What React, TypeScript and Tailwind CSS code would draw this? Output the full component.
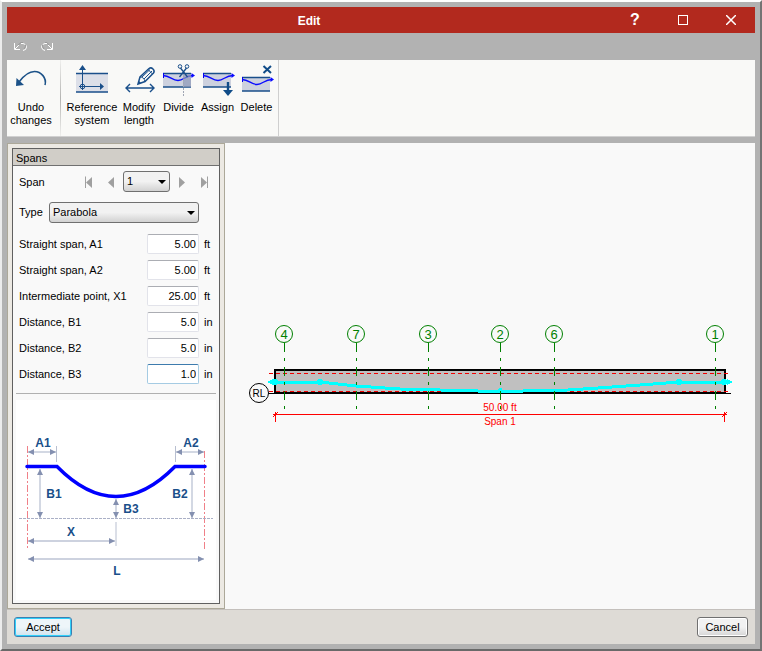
import { useState } from 'react'
import type { ReactNode } from 'react'

const NAVY = '#1a4f8a'

const fields = [
  { id: 'a1', label: 'Straight span, A1', value: '5.00', unit: 'ft' },
  { id: 'a2', label: 'Straight span, A2', value: '5.00', unit: 'ft' },
  { id: 'x1', label: 'Intermediate point, X1', value: '25.00', unit: 'ft' },
  { id: 'b1', label: 'Distance, B1', value: '5.0', unit: 'in' },
  { id: 'b2', label: 'Distance, B2', value: '5.0', unit: 'in' },
  { id: 'b3', label: 'Distance, B3', value: '1.0', unit: 'in', active: true },
]

const gridLines = [
  { name: '4', x: 284 },
  { name: '7', x: 356 },
  { name: '3', x: 428 },
  { name: '2', x: 500 },
  { name: '6', x: 554 },
  { name: '1', x: 715 },
]

function ToolButton({ label, width, viewBox, children }: { label: string; width: string; viewBox: string; children: ReactNode }) {
  return (
    <button type="button" className={`flex flex-col items-center pt-0.5 text-center leading-[13px] ${width}`}>
      <svg viewBox={viewBox} className="mb-[3px] h-9 w-9 shrink-0" fill="none">
        {children}
      </svg>
      {label}
    </button>
  )
}

// Slab with the tendon running through it, shared by three tools
function Tendon({ x, y }: { x: number; y: number }) {
  return (
    <g transform={`translate(${x} ${y})`}>
      <rect x="0" y="0" width="28" height="14" fill="#cdd1de" />
      <path d="M0 0.500H28M0 14H28" stroke={NAVY} strokeWidth="1.4" />
      <path d="M0.500 0V5" stroke="#0000f0" />
      <path d="M0 2.500C7 2.500 9 7.500 15 7.500S22 2.500 30 2.500" stroke="#0a0aff" strokeWidth="1.300" />
      <path d="M28.500 0L32 2.500L28.500 5Z" fill="#0a0aff" />
    </g>
  )
}

function Ribbon() {
  return (
    <div className="flex h-[77px] border-b border-[#d0d0d0] bg-[#f9f9f7]">
      <ToolButton label="Undo changes" width="w-12" viewBox="13 62 36 36">
        <path d="M45 85C47 78 41 71.500 34.500 71.500C28 71.500 23.500 76 19 82" stroke="#1c5288" strokeWidth="1.6" />
        <path d="M16 86L16.500 78L24 85Z" fill="#1c5288" />
      </ToolButton>
      <div className="mr-0.5 ml-[5px] w-px bg-linear-to-b from-[#efefed] via-[#b4b4b2] to-[#efefed]" />
      <ToolButton label="Reference system" width="w-[58px]" viewBox="74 62 36 36">
        <rect x="76" y="73" width="32" height="19" fill="#dcdfe8" />
        <path d="M76 73.500H108M76 92H108" stroke={NAVY} strokeWidth="1.4" />
        <path d="M82.500 69V90M79 86.500H101" stroke={NAVY} strokeWidth="1" />
        <circle cx="82.500" cy="86.500" r="2.300" stroke={NAVY} strokeWidth="1" />
        <path d="M79 70L82.500 65L86 70ZM100 83L104 86.500L100 90Z" fill={NAVY} />
      </ToolButton>
      <ToolButton label="Modify length" width="w-9" viewBox="121 62 36 36">
        <path d="M126 88H154M130 84L126 88L130 92M150 84L154 88L150 92" stroke={NAVY} strokeWidth="1.4" />
        <path d="M138 84L140 77L149 68.500Q151 67 153 69Q155 71 153.500 73L145 81.500Z" stroke={NAVY} strokeWidth="1.5" />
        <path d="M140 77Q144 77 145 81.500M142 77L150 69.500M144 79L152 71M148 69.500L152.500 74" stroke={NAVY} strokeWidth="1" />
        <path d="M138 84L139 81L141 83Z" fill={NAVY} />
      </ToolButton>
      <ToolButton label="Divide" width="ml-0.5 w-[39px]" viewBox="161 62 36 36">
        <Tendon x={163} y={73} />
        <rect x="183" y="74" width="8" height="13" fill="#8d98b8" fillOpacity="0.7" />
        <path d="M183.500 76V97" stroke="#a0a6b4" strokeDasharray="2 1" />
        <path d="M186.500 68L179.500 77M180.500 68L187.500 77" stroke={NAVY} strokeWidth="1.300" />
        <circle cx="180" cy="66.500" r="1.800" stroke={NAVY} />
        <circle cx="187" cy="66.500" r="1.800" stroke={NAVY} />
      </ToolButton>
      <ToolButton label="Assign" width="w-[39px]" viewBox="199 62 36 36">
        <Tendon x={202} y={73} />
        <path d="M227 82V91" stroke="#104c88" strokeWidth="2.4" />
        <path d="M222 90H232L227 96Z" fill="#104c88" />
      </ToolButton>
      <ToolButton label="Delete" width="w-[39px]" viewBox="238 62 36 36">
        <Tendon x={241} y={77} />
        <path d="M262.500 66L270 73M270 66L262.500 73" stroke="#104c88" strokeWidth="2" />
      </ToolButton>
      <div className="ml-0.5 w-px bg-[#cfcfcf]" />
    </div>
  )
}

function NavButton({ label, flip, bar }: { label: string; flip?: boolean; bar?: boolean }) {
  return (
    <button type="button" aria-label={label} className={`w-4 ${flip ? '-scale-x-100' : ''}`}>
      <svg viewBox="0 0 16 16" className="size-4" fill="#a0a0a0">
        <path d="M11 3V14L5 8.500Z" />
        {bar && <path d="M4 2.500H5V14H4Z" />}
      </svg>
    </button>
  )
}

function DropDown({ id, options, width }: { id: string; options: string[]; width: string }) {
  return (
    <div className={`relative ${width}`}>
      <select
        id={id}
        className="block h-[21px] w-full appearance-none rounded-[3px] border border-[#707070] bg-linear-to-b from-[#f2f2f2] from-50% to-[#d2d2d2] pl-[3px] text-black"
      >
        {options.map(o => <option key={o}>{o}</option>)}
      </select>
      <svg viewBox="0 0 8 4" className="pointer-events-none absolute top-[9px] right-1 h-1 w-2">
        <path d="M0 0H8L4 4Z" fill="#000" />
      </svg>
    </div>
  )
}

function Arrow({ x1, y1, x2, y2 }: { x1: number; y1: number; x2: number; y2: number }) {
  const heads = x1 === x2
    ? `M${x1} ${y1}l-3 6h6ZM${x2} ${y2}l-3 -6h6Z`
    : `M${x1} ${y1}l6 -3v6ZM${x2} ${y2}l-6 -3v6Z`
  return (
    <g>
      <path d={`M${x1} ${y1}L${x2} ${y2}`} stroke="#bcc3d4" strokeWidth="1.3" />
      <path d={heads} fill="#8490b0" />
    </g>
  )
}

function ParabolaDiagram() {
  return (
    <svg viewBox="16 400 200 200" className="w-full bg-white" fill="none" role="img" aria-label="Parabola dimensions">
      <path d="M27.500 446V549M204.500 451V549" stroke="#f08088" strokeDasharray="7 2 2 2" />
      <path d="M19 518.500H213" stroke="#aab0c6" strokeDasharray="3 1" />
      <path d="M56.500 446V462M175.500 446V462M116 522V546" stroke="#b8bfd0" />
      <Arrow x1={28} y1={452} x2={56} y2={452} />
      <Arrow x1={176} y1={452} x2={204} y2={452} />
      <Arrow x1={40} y1={469} x2={40} y2={518} />
      <Arrow x1={192} y1={469} x2={192} y2={518} />
      <Arrow x1={116} y1={499} x2={116} y2={518} />
      <Arrow x1={28} y1={541} x2={115} y2={541} />
      <Arrow x1={28} y1={559} x2={204} y2={559} />
      <path d="M27 466.500H57Q116 526.500 175 466.500H205" stroke="#0000ff" strokeWidth="3.500" strokeLinecap="round" />
      <g fill={NAVY} fontSize="12" fontWeight="700" textAnchor="middle">
        <text x="43" y="447">A1</text>
        <text x="191" y="447">A2</text>
        <text x="54" y="498">B1</text>
        <text x="180" y="498">B2</text>
        <text x="131" y="513">B3</text>
        <text x="71" y="536">X</text>
        <text x="117" y="575">L</text>
      </g>
    </svg>
  )
}

function SpansPanel() {
  const [values, setValues] = useState<Record<string, string>>(
    Object.fromEntries(fields.map(f => [f.id, f.value]))
  )

  return (
    <aside className="flex w-[218px] shrink-0 flex-col border border-[#aca899] bg-[#ece9e3] p-1">
      <section className="flex flex-1 flex-col border border-[#606060] bg-[#f9f9f9]">
        <h2 className="h-[17px] border-b border-[#707070] bg-[#d1cec8] pl-[3px] leading-[18px]">Spans</h2>

        <div className="mt-[5px] flex items-center gap-1.5 pr-[7px] pl-1.5">
          <label htmlFor="span" className="flex-1 pt-px">Span</label>
          <NavButton label="First span" bar />
          <NavButton label="Previous span" />
          <DropDown id="span" options={['1']} width="-mx-0.5 w-[47px]" />
          <NavButton label="Next span" flip />
          <NavButton label="Last span" flip bar />
        </div>

        <div className="mt-2.5 flex items-center pl-1.5">
          <label htmlFor="type" className="w-[30px]">Type</label>
          <DropDown id="type" options={['Parabola', 'Straight']} width="w-[150px]" />
        </div>

        <div className="mt-2.5 mb-[9px] flex flex-col gap-[5px] pr-[5px] pl-1.5">
          {fields.map(f => (
            <div key={f.id} className="flex h-[21px] items-center">
              <label htmlFor={f.id} className="flex-1 pt-0.5">{f.label}</label>
              <input
                id={f.id}
                value={values[f.id]}
                onChange={e => setValues({ ...values, [f.id]: e.target.value })}
                className={`h-5 w-[52px] rounded-xs border bg-white pr-0.5 text-right outline-none ${
                  f.active ? 'border-[#a5cbe3] border-t-[#3d7bad]' : 'border-[#e2e3ea] border-t-[#abadb3]'
                }`}
              />
              <span className="w-[15px] pt-0.5 pl-[5px]">{f.unit}</span>
            </div>
          ))}
        </div>

        <div className="mx-[3px] flex-1 border-t border-[#b0b0b0] pt-1.5">
          <ParabolaDiagram />
        </div>
      </section>
    </aside>
  )
}

function BeamView() {
  return (
    <main className="flex flex-1 items-start bg-[#f9f9f9]">
      <svg viewBox="225 143 530 466" className="w-full" fill="none" shapeRendering="crispEdges">
        <rect x="275" y="370" width="450" height="23" fill="#c0c0c0" stroke="#000" strokeWidth="2" />
        <path d="M268 393.500H275M725 393.500H731" stroke="#000" />
        <path d="M269 373.500H729M269 391.500H729" stroke="#f00000" strokeDasharray="4 3" />
        <path d="M272 382H320L356 386L400 389L440 390L478 391H523L568 390L598 388L640 385L679 382H730" stroke="#00ffff" strokeWidth="3" />
        <path d="M267 382L273 379V385ZM733 382L727 379V385Z" fill="#00ffff" />
        <g fill="#00ffff">
          <circle cx="275" cy="382" r="3" />
          <circle cx="320" cy="382" r="3" />
          <circle cx="500" cy="390" r="2" />
          <circle cx="679" cy="382" r="3" />
          <circle cx="724" cy="382" r="3" />
        </g>

        {/* Grid axes */}
        {gridLines.map(g => (
          <g key={g.name}>
            <circle cx={g.x} cy="334" r="8.500" stroke="#008000" shapeRendering="auto" />
            <path d={`M${g.x + 0.5} 343V410`} stroke="#008000" strokeDasharray="9 6 3 6" />
            <text x={g.x} y="339" fontSize="13" textAnchor="middle" fill="#008000">{g.name}</text>
          </g>
        ))}

        <circle cx="259" cy="393" r="9.500" stroke="#000" fill="#f9f9f9" shapeRendering="auto" />
        <text x="259" y="397" fontSize="10" textAnchor="middle" fill="#000">RL</text>

        {/* Span dimension */}
        <path d="M273 414.500H727M275.500 412V422M724.500 412V422M273 417L278 412M722 417L727 412" stroke="#ff0000" />
        <text x="500" y="411" fontSize="10" textAnchor="middle" fill="#ff0000">50.00 ft</text>
        <text x="500" y="425" fontSize="10" textAnchor="middle" fill="#ff0000">Span 1</text>
      </svg>
    </main>
  )
}

export default function App() {
  return (
    <div className="flex min-h-screen flex-col border-t-2 border-r-2 border-b-2 border-l-2 border-t-white border-r-[#747474] border-b-[#696969] border-l-[#ececec] bg-[#b2b2b2] px-[5px] pt-[5px] pb-[5px] font-['Liberation_Sans',sans-serif] text-[11px] text-black">
      <header className="flex h-[26px] items-center bg-[#b2291e] text-white">
        <h1 className="flex-1 pt-px text-center text-[12px] font-bold">Edit</h1>
        <div className="flex items-center">
          <button type="button" aria-label="Help" className="w-12 text-[16px] leading-none font-bold">?</button>
          <button type="button" aria-label="Maximize" className="flex w-12 justify-center">
            <span className="size-2.5 border border-white" />
          </button>
          <button type="button" aria-label="Close" className="flex w-12 justify-center">
            <svg viewBox="0 0 10 10" className="size-2.5" stroke="#fff" strokeWidth="1.500">
              <path d="M0 0L10 10M10 0L0 10" />
            </svg>
          </button>
        </div>
      </header>

      <div className="flex h-[27px] items-center gap-3 pl-[7px]">
        <button type="button" aria-label="Undo">
          <svg viewBox="0 0 14 9" className="h-[9px] w-3.5" fill="none" stroke="#fff">
            <path d="M0.500 1V7.500H6M1 7L5 3M7 1.500H9Q12.500 2 12.500 5Q12.500 8 9 8.500" />
            <path d="M4 3L7 0.500H9M11.500 2.500Q12 5 10 7" stroke="#999" />
          </svg>
        </button>
        <button type="button" aria-label="Redo">
          <svg viewBox="0 0 14 9" className="h-[9px] w-3.5" fill="none" stroke="#fff">
            <path d="M12.500 1V7.500H7M12 7L8 3M7 1.500H5Q1.500 2 1.500 5Q2 8 5 8.500" />
            <path d="M9 3L7 0.500H5M2.500 2.500Q2 5 4 7" stroke="#999" />
          </svg>
        </button>
      </div>

      <Ribbon />

      <div className="mt-1.5 flex flex-1">
        <SpansPanel />
        <BeamView />
      </div>

      <footer className="flex h-[35px] items-center justify-between border-t border-[#c4c0bc] bg-[#dedbd6] px-[7px]">
        <button type="button" className="h-5 w-[58px] rounded-[3px] border border-[#3c7fb1] bg-linear-to-b from-[#eef5f9] from-50% to-[#cfe3ee] leading-none inset-ring-1 inset-ring-[#30d0fa]">
          Accept
        </button>
        <button type="button" className="h-5 w-[51px] rounded-[3px] border border-[#707070] bg-linear-to-b from-[#f2f2f2] from-50% to-[#d5d5d5] leading-none inset-ring-1 inset-ring-white">
          Cancel
        </button>
      </footer>
    </div>
  )
}
